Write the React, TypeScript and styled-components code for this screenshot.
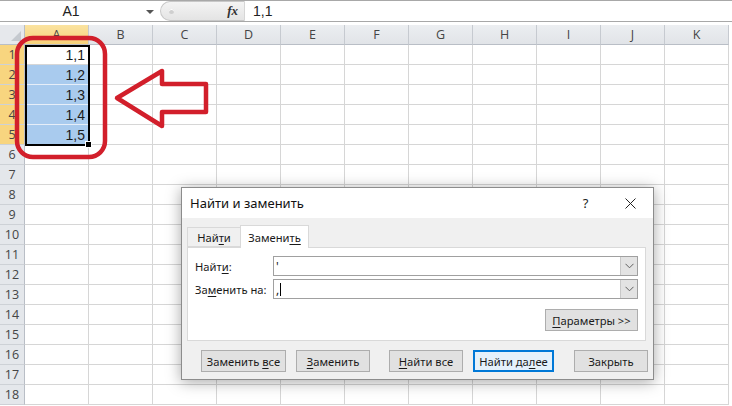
import React from 'react'
import styled, { createGlobalStyle } from 'styled-components'

const GlobalStyle = createGlobalStyle`
  html, body {
    margin: 0;
    padding: 0;
    background: #ffffff;
    overflow: hidden;
  }
  body {
    font-family: "Noto Sans", "Liberation Sans", sans-serif;
  }
`

const COLS = ['A', 'B', 'C', 'D', 'E', 'F', 'G', 'H', 'I', 'J', 'K']
const ROWS = Array.from({ length: 18 }, (_, i) => i + 1)
const VALUES: Record<number, string> = { 1: '1,1', 2: '1,2', 3: '1,3', 4: '1,4', 5: '1,5' }

const Page = styled.div`
  position: relative;
  width: 732px;
  height: 406px;
  overflow: hidden;
  background: #fff;
`

/* ---------- formula bar ---------- */

const FormulaBar = styled.div`
  display: flex;
  align-items: stretch;
  height: 22px;
  border-top: 1px solid #a8a8a8;
  border-bottom: 1px solid #a8a8a8;
  box-sizing: border-box;
  margin-bottom: 3px;
  background: #fff;
`

const NameBox = styled.div`
  position: relative;
  width: 160px;
  display: flex;
  align-items: center;
  justify-content: center;
  padding-right: 18px;
  box-sizing: border-box;
  font-family: "Liberation Sans", Arial, sans-serif;
  font-size: 14px;
  color: #222;
`

const NameArrow = styled.span`
  position: absolute;
  right: 6px;
  top: 9px;
  width: 0;
  height: 0;
  border-left: 4px solid transparent;
  border-right: 4px solid transparent;
  border-top: 4px solid #555;
`

const FxPill = styled.div`
  width: 85px;
  display: flex;
  align-items: center;
  justify-content: space-between;
  padding: 0 6px 0 8px;
  box-sizing: border-box;
  border-radius: 11px 0 0 11px;
  border: 1px solid #c8c8c8;
  border-right: 1px solid #d6d6d6;
  background: linear-gradient(#f4f4f4, #e4e4e4);
`

const Dot = styled.span`
  width: 5px;
  height: 5px;
  border-radius: 50%;
  background: #cfcfcf;
  box-shadow: inset 0 1px 0 #fff;
`

const Fx = styled.span`
  font-family: "Liberation Serif", "Times New Roman", serif;
  font-style: italic;
  font-weight: bold;
  font-size: 13px;
  color: #333;
`

const FormulaText = styled.div`
  flex: 1;
  display: flex;
  align-items: center;
  padding-left: 8px;
  font-family: "Liberation Sans", Arial, sans-serif;
  font-size: 14px;
  color: #222;
`

/* ---------- sheet grid ---------- */

const Sheet = styled.div`
  position: relative;
  display: grid;
  grid-template-columns: 25px repeat(11, 64px);
  grid-auto-rows: 20px;
`

const Corner = styled.div`
  background: #e6e8ec;
  border-right: 1px solid #b9bec6;
  border-bottom: 1px solid #b9bec6;
  box-sizing: border-box;
  position: relative;
  &::after {
    content: '';
    position: absolute;
    right: 3px;
    bottom: 3px;
    border-left: 10px solid transparent;
    border-bottom: 10px solid #c5c9cf;
  }
`

const ColHead = styled.div<{ $active?: boolean }>`
  display: flex;
  align-items: center;
  justify-content: center;
  box-sizing: border-box;
  border-right: 1px solid #c6cad0;
  border-bottom: 1px solid #b9bec6;
  background: ${(p) => (p.$active ? 'linear-gradient(#fbe3a0, #f7d27a)' : 'linear-gradient(#eceef1, #e1e4e8)')};
  font-family: "Open Sans", "Noto Sans", sans-serif;
  font-size: 12.5px;
  color: #454545;
`

const RowHead = styled.div<{ $active?: boolean }>`
  display: flex;
  align-items: center;
  justify-content: center;
  box-sizing: border-box;
  border-right: 1px solid #b9bec6;
  border-bottom: 1px solid #cdd1d6;
  background: ${(p) => (p.$active ? '#f8d57f' : '#e4e7eb')};
  font-family: "Open Sans", "Noto Sans", sans-serif;
  font-size: 12.5px;
  color: #454545;
`

const Cell = styled.div<{ $selected?: boolean }>`
  display: flex;
  align-items: center;
  justify-content: flex-end;
  padding-right: 3px;
  box-sizing: border-box;
  border-right: 1px solid #d6d6d6;
  border-bottom: 1px solid ${(p) => (p.$selected ? '#e6eef8' : '#d6d6d6')};
  background: ${(p) => (p.$selected ? '#a9cbee' : '#fff')};
  font-family: "Liberation Sans", Arial, sans-serif;
  font-size: 14px;
  color: #1a1a1a;
`

const Selection = styled.div`
  position: absolute;
  left: 25px;
  top: 20px;
  width: 65px;
  height: 101px;
  border: 2px solid #000;
  box-sizing: border-box;
  pointer-events: none;
  &::after {
    content: '';
    position: absolute;
    right: -4px;
    bottom: -4px;
    width: 5px;
    height: 5px;
    background: #000;
    border: 1px solid #fff;
  }
`

/* ---------- annotation ---------- */

const Annotation = styled.svg`
  position: absolute;
  left: 0;
  top: 0;
  pointer-events: none;
`

/* ---------- dialog ---------- */

const Dialog = styled.div`
  position: absolute;
  left: 181px;
  top: 187px;
  width: 473px;
  height: 193px;
  box-sizing: border-box;
  border: 1px solid #8c8c8c;
  background: #f0f0f0;
  box-shadow: 0 2px 14px rgba(0, 0, 0, 0.35);
  display: flex;
  flex-direction: column;
  font-family: "Noto Sans", "Open Sans", sans-serif;
  font-size: 11.2px;
  color: #1a1a1a;
`

const TitleBar = styled.div`
  height: 30px;
  background: #fff;
  display: flex;
  align-items: center;
  padding-left: 8px;
`

const Title = styled.div`
  flex: 1;
  font-size: 13px;
  color: #111;
`

const TitleIcon = styled.div`
  width: 45px;
  height: 30px;
  display: flex;
  align-items: center;
  justify-content: center;
`

const Help = styled.span`
  font-size: 13px;
  color: #222;
`

const Tabs = styled.div`
  display: flex;
  align-items: flex-end;
  height: 29px;
  padding-left: 5px;
`

const Tab = styled.div<{ $active?: boolean }>`
  box-sizing: border-box;
  height: ${(p) => (p.$active ? '23px' : '20px')};
  width: ${(p) => (p.$active ? '69px' : '53px')};
  display: flex;
  align-items: center;
  justify-content: center;
  background: ${(p) => (p.$active ? '#fff' : '#f0f0f0')};
  border: 1px solid #d9d9d9;
  border-bottom: ${(p) => (p.$active ? 'none' : '1px solid #d9d9d9')};
  border-right: ${(p) => (p.$active ? '1px solid #d9d9d9' : 'none')};
  margin-bottom: ${(p) => (p.$active ? '-1px' : '0')};
  position: relative;
  z-index: ${(p) => (p.$active ? 1 : 0)};
`

const Panel = styled.div`
  margin: 0 7px 0 5px;
  height: 94px;
  box-sizing: border-box;
  background: #fff;
  border: 1px solid #d9d9d9;
  padding: 8px 7px 0 7px;
  display: flex;
  flex-direction: column;
  gap: 3px;
`

const FieldRow = styled.div`
  display: flex;
  align-items: center;
  height: 20px;
`

const Label = styled.div`
  width: 78px;
  white-space: nowrap;
`

const Combo = styled.div`
  flex: 1;
  height: 20px;
  box-sizing: border-box;
  border: 1px solid #a0a0a0;
  display: flex;
  align-items: stretch;
  background: #fff;
`

const ComboText = styled.div`
  flex: 1;
  display: flex;
  align-items: center;
  padding-left: 2px;
  font-size: 12px;
`

const Caret = styled.span`
  display: inline-block;
  width: 1px;
  height: 13px;
  background: #000;
  margin-left: 1px;
`

const ComboButton = styled.div`
  width: 16px;
  background: #e3e3e3;
  border-left: 1px solid #c8c8c8;
  display: flex;
  align-items: center;
  justify-content: center;
`

const ParamsRow = styled.div`
  display: flex;
  justify-content: flex-end;
  margin-top: 7px;
`

const Button = styled.div<{ $w: number; $default?: boolean }>`
  width: ${(p) => p.$w}px;
  height: 22px;
  box-sizing: border-box;
  display: flex;
  align-items: center;
  justify-content: center;
  background: ${(p) => (p.$default ? '#e5f1fb' : '#e1e1e1')};
  border: ${(p) => (p.$default ? '2px solid #0078d7' : '1px solid #adadad')};
  white-space: nowrap;
`

const Footer = styled.div`
  display: flex;
  align-items: center;
  padding: 9px 0 0 19px;
`

const Spacer = styled.div<{ $w: number }>`
  width: ${(p) => p.$w}px;
  flex: none;
`

const U = styled.span`
  text-decoration: underline;
  text-underline-offset: 2px;
`

const Chevron = () => (
  <svg width="9" height="6" viewBox="0 0 9 6">
    <path d="M0.5 0.8 L4.5 4.8 L8.5 0.8" fill="none" stroke="#606060" strokeWidth="1" />
  </svg>
)

const CloseIcon = () => (
  <svg width="11" height="11" viewBox="0 0 11 11">
    <path d="M0.5 0.5 L10.5 10.5 M10.5 0.5 L0.5 10.5" stroke="#222" strokeWidth="1" />
  </svg>
)

export default function App() {
  return (
    <Page>
      <GlobalStyle />
      <FormulaBar>
        <NameBox>
          A1
          <NameArrow />
        </NameBox>
        <FxPill>
          <Dot />
          <Fx>fx</Fx>
        </FxPill>
        <FormulaText>1,1</FormulaText>
      </FormulaBar>

      <Sheet>
        <Corner />
        {COLS.map((c) => (
          <ColHead key={c} $active={c === 'A'}>
            {c}
          </ColHead>
        ))}
        {ROWS.map((r) => (
          <React.Fragment key={r}>
            <RowHead $active={r <= 5}>{r}</RowHead>
            {COLS.map((c) => (
              <Cell key={c} $selected={c === 'A' && r >= 2 && r <= 5}>
                {c === 'A' ? VALUES[r] : null}
              </Cell>
            ))}
          </React.Fragment>
        ))}
        <Selection />
      </Sheet>

      <Annotation width="732" height="406" viewBox="0 0 732 406">
        <rect x="17" y="38" width="88" height="119" rx="16" ry="16" fill="none" stroke="#d21f2b" strokeWidth="4.5" />
        <polygon
          points="117,98 162,71 162,84 206,84 206,112 162,112 162,126"
          fill="none"
          stroke="#d21f2b"
          strokeWidth="4.5"
          strokeLinejoin="round"
        />
      </Annotation>

      <Dialog>
        <TitleBar>
          <Title>Найти и заменить</Title>
          <TitleIcon>
            <Help>?</Help>
          </TitleIcon>
          <TitleIcon>
            <CloseIcon />
          </TitleIcon>
        </TitleBar>
        <Tabs>
          <Tab>
            <span>
              Най<U>т</U>и
            </span>
          </Tab>
          <Tab $active>
            <span>
              Замени<U>ть</U>
            </span>
          </Tab>
        </Tabs>
        <Panel>
          <FieldRow>
            <Label>
              Найт<U>и</U>:
            </Label>
            <Combo>
              <ComboText>'</ComboText>
              <ComboButton>
                <Chevron />
              </ComboButton>
            </Combo>
          </FieldRow>
          <FieldRow>
            <Label>
              За<U>м</U>енить на:
            </Label>
            <Combo>
              <ComboText>
                ,<Caret />
              </ComboText>
              <ComboButton>
                <Chevron />
              </ComboButton>
            </Combo>
          </FieldRow>
          <ParamsRow>
            <Button $w={93}>
              <span>
                <U>П</U>араметры &gt;&gt;
              </span>
            </Button>
          </ParamsRow>
        </Panel>
        <Footer>
          <Button $w={85}>
            <span>
              Заменить <U>в</U>се
            </span>
          </Button>
          <Spacer $w={10} />
          <Button $w={74}>
            <span>
              <U>З</U>аменить
            </span>
          </Button>
          <Spacer $w={19} />
          <Button $w={74}>
            <span>
              <U>Н</U>айти все
            </span>
          </Button>
          <Spacer $w={10} />
          <Button $w={81} $default>
            <span>
              Найти да<U>л</U>ее
            </span>
          </Button>
          <Spacer $w={20} />
          <Button $w={74}>
            <span>Закрыть</span>
          </Button>
        </Footer>
      </Dialog>
    </Page>
  )
}
